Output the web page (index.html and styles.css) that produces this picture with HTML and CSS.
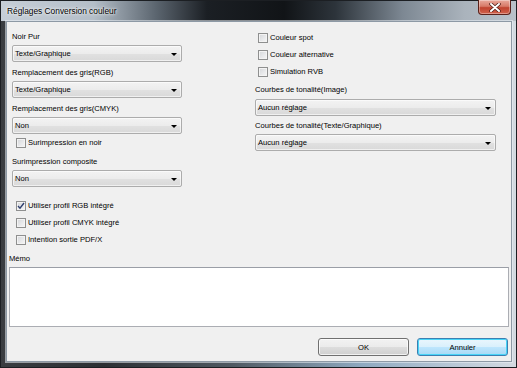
FILE: index.html
```html
<!DOCTYPE html>
<html lang="fr">

<head>
	<meta charset="UTF-8">
	<title>Réglages Conversion couleur</title>
	<link rel="stylesheet" href="styles.css">
</head>

<body>

	<div class="window">
		<div class="titlebar">
			<span class="title">Réglages Conversion couleur</span>
			<div class="close">
				<svg width="12" height="9" viewBox="0 0 12 9">
					<path d="M2 1 L10 8 M10 1 L2 8" stroke="#4a1a14" stroke-width="3.4" stroke-linecap="round" />
					<path d="M2 1 L10 8 M10 1 L2 8" stroke="#ffffff" stroke-width="2" stroke-linecap="round" />
				</svg>
			</div>
		</div>

		<div class="client">
			<div class="columns">
				<section class="col leftCol">
					<div class="label first">Noir Pur</div>
					<div class="combo"><span>Texte/Graphique</span><i class="arrow"></i></div>

					<div class="label">Remplacement des gris(RGB)</div>
					<div class="combo"><span>Texte/Graphique</span><i class="arrow"></i></div>

					<div class="label">Remplacement des gris(CMYK)</div>
					<div class="combo"><span>Non</span><i class="arrow"></i></div>

					<div class="check"><span class="box"></span>Surimpression en noir</div>

					<div class="label">Surimpression composite</div>
					<div class="combo"><span>Non</span><i class="arrow"></i></div>

					<div class="check spaced">
						<span class="box">
							<svg width="8" height="8" viewBox="0 0 8 8">
								<path d="M1 4 L3 6.2 L7 1" fill="none" stroke="#2f3f6e" stroke-width="1.4" />
							</svg>
						</span>Utiliser profil RGB intégré
					</div>
					<div class="check"><span class="box"></span>Utiliser profil CMYK intégré</div>
					<div class="check"><span class="box"></span>Intention sortie PDF/X</div>
				</section>

				<section class="col rightCol">
					<div class="check"><span class="box"></span>Couleur spot</div>
					<div class="check"><span class="box"></span>Couleur alternative</div>
					<div class="check"><span class="box"></span>Simulation RVB</div>

					<div class="label">Courbes de tonalité(Image)</div>
					<div class="combo wide"><span>Aucun réglage</span><i class="arrow"></i></div>

					<div class="label">Courbes de tonalité(Texte/Graphique)</div>
					<div class="combo"><span>Aucun réglage</span><i class="arrow"></i></div>
				</section>
			</div>

			<div class="memo">
				<div class="label">Mémo</div>
				<div class="memoBox"></div>
			</div>

			<div class="buttons">
				<button class="btn">OK</button>
				<button class="btn default">Annuler</button>
			</div>
		</div>
	</div>

</body>

</html>
```

FILE: styles.css
```css
* {
	margin: 0;
	padding: 0;
	outline: 0;
	box-sizing: border-box;
}

body {
	font-family: 'Liberation Sans', Arial, sans-serif;
	font-size: 7.6px;
	color: #000;
	background-color: #ffffff;
}

.window {
	width: 517px;
	height: 368px;
	display: flex;
	flex-direction: column;
	border: 1px solid #1c1f23;
	padding: 0 4px 5px 5px;
	background: linear-gradient(to right, #3a3d41 0%, #2c2f33 20%, #4f5962 45%, #8fa9c0 70%, #b9c8d6 88%, #d3dae1 100%);
}

.titlebar {
	height: 20px;
	display: flex;
	justify-content: space-between;
	margin: 0 -4px 0 -5px;
	padding: 0 5px 0 5px;
	background: linear-gradient(to right, #c6ced7 0%, #b4bec8 18%, #5c6670 30%, #1b1f24 40%, #111417 55%, #2d343b 65%, #7d8893 78%, #aab3bc 90%, #b9c1c9 100%);
}

.title {
	font-size: 8.35px;
	line-height: 20px;
	padding-left: 1px;
	color: #000;
	text-shadow: 0 0 4px #ffffff, 0 0 2px #ffffff;
}

.close {
	width: 33px;
	height: 15px;
	margin-top: -1px;
	display: flex;
	align-items: center;
	justify-content: center;
	border: 1px solid #5a211a;
	border-top: none;
	border-radius: 0 0 4px 4px;
	background: linear-gradient(#e9a99c 0%, #d77a68 45%, #c0432f 55%, #d0624c 100%);
	box-shadow: inset 0 0 0 1px rgba(255, 255, 255, 0.35);
}

.client {
	flex: 1;
	display: flex;
	flex-direction: column;
	background-color: #f0f0f0;
	border: 1px solid #8d99a5;
	box-shadow: 0 0 0 1px rgba(235, 240, 245, 0.55);
}

.columns {
	display: flex;
}

.col {
	display: flex;
	flex-direction: column;
}

.leftCol {
	width: 175px;
	padding: 9px 0 0 5px;
}

.rightCol {
	width: 241px;
	margin-left: 73px;
	padding-top: 7px;
}

.label {
	height: 11px;
	line-height: 11px;
	margin-top: 5px;
}

.label.first {
	margin-top: 0;
}

.combo {
	height: 17px;
	margin-top: 3px;
	display: flex;
	align-items: center;
	justify-content: space-between;
	padding: 0 4px 0 2px;
	border: 1px solid #acacac;
	border-radius: 2px;
	background: linear-gradient(#f3f3f3 0%, #ececec 50%, #e1e1e1 51%, #d9d9d9 100%);
	box-shadow: inset 0 0 0 1px rgba(255, 255, 255, 0.6);
}

.arrow {
	width: 0;
	height: 0;
	border-left: 3px solid transparent;
	border-right: 3px solid transparent;
	border-top: 3px solid #000;
	margin-top: 1px;
}

.check {
	height: 17px;
	display: flex;
	align-items: center;
	gap: 2px;
	padding-left: 4px;
}

.rightCol .check {
	padding-left: 3px;
}

.check.spaced {
	margin-top: 10px;
}

.box {
	width: 10px;
	height: 10px;
	display: flex;
	align-items: center;
	justify-content: center;
	border: 1px solid #8e8f8f;
	background: linear-gradient(135deg, #d4d6d9 0%, #e9eaec 60%, #f6f6f6 100%);
	box-shadow: inset 0 0 0 1px #f3f3f3;
}

.rightCol .label {
	margin-top: 4px;
}

.rightCol .combo.wide {
	margin-top: 4px;
}

.memo {
	margin: 0 2px;
}

.memo .label {
	margin-top: 5px;
}

.memoBox {
	height: 60px;
	margin-top: 3px;
	background-color: #fff;
	border: 1px solid #abadb3;
	border-top-color: #9a9ea6;
}

.buttons {
	display: flex;
	justify-content: flex-end;
	gap: 8px;
	margin-top: 11px;
	padding-right: 3px;
}

.btn {
	width: 91px;
	height: 18px;
	font-family: 'Liberation Sans', Arial, sans-serif;
	font-size: 7.6px;
	color: #000;
	border: 1px solid #707070;
	border-radius: 3px;
	background: linear-gradient(#f2f2f2 0%, #ebebeb 50%, #dddddd 51%, #cfcfcf 100%);
	box-shadow: inset 0 0 0 1px rgba(255, 255, 255, 0.7);
}

.btn.default {
	border-color: #3c7fb1;
	background: linear-gradient(#eaf6fd 0%, #d9f0fc 50%, #bee6fd 51%, #a7d9f5 100%);
	box-shadow: inset 0 0 0 1px #48d4f7;
}
```
